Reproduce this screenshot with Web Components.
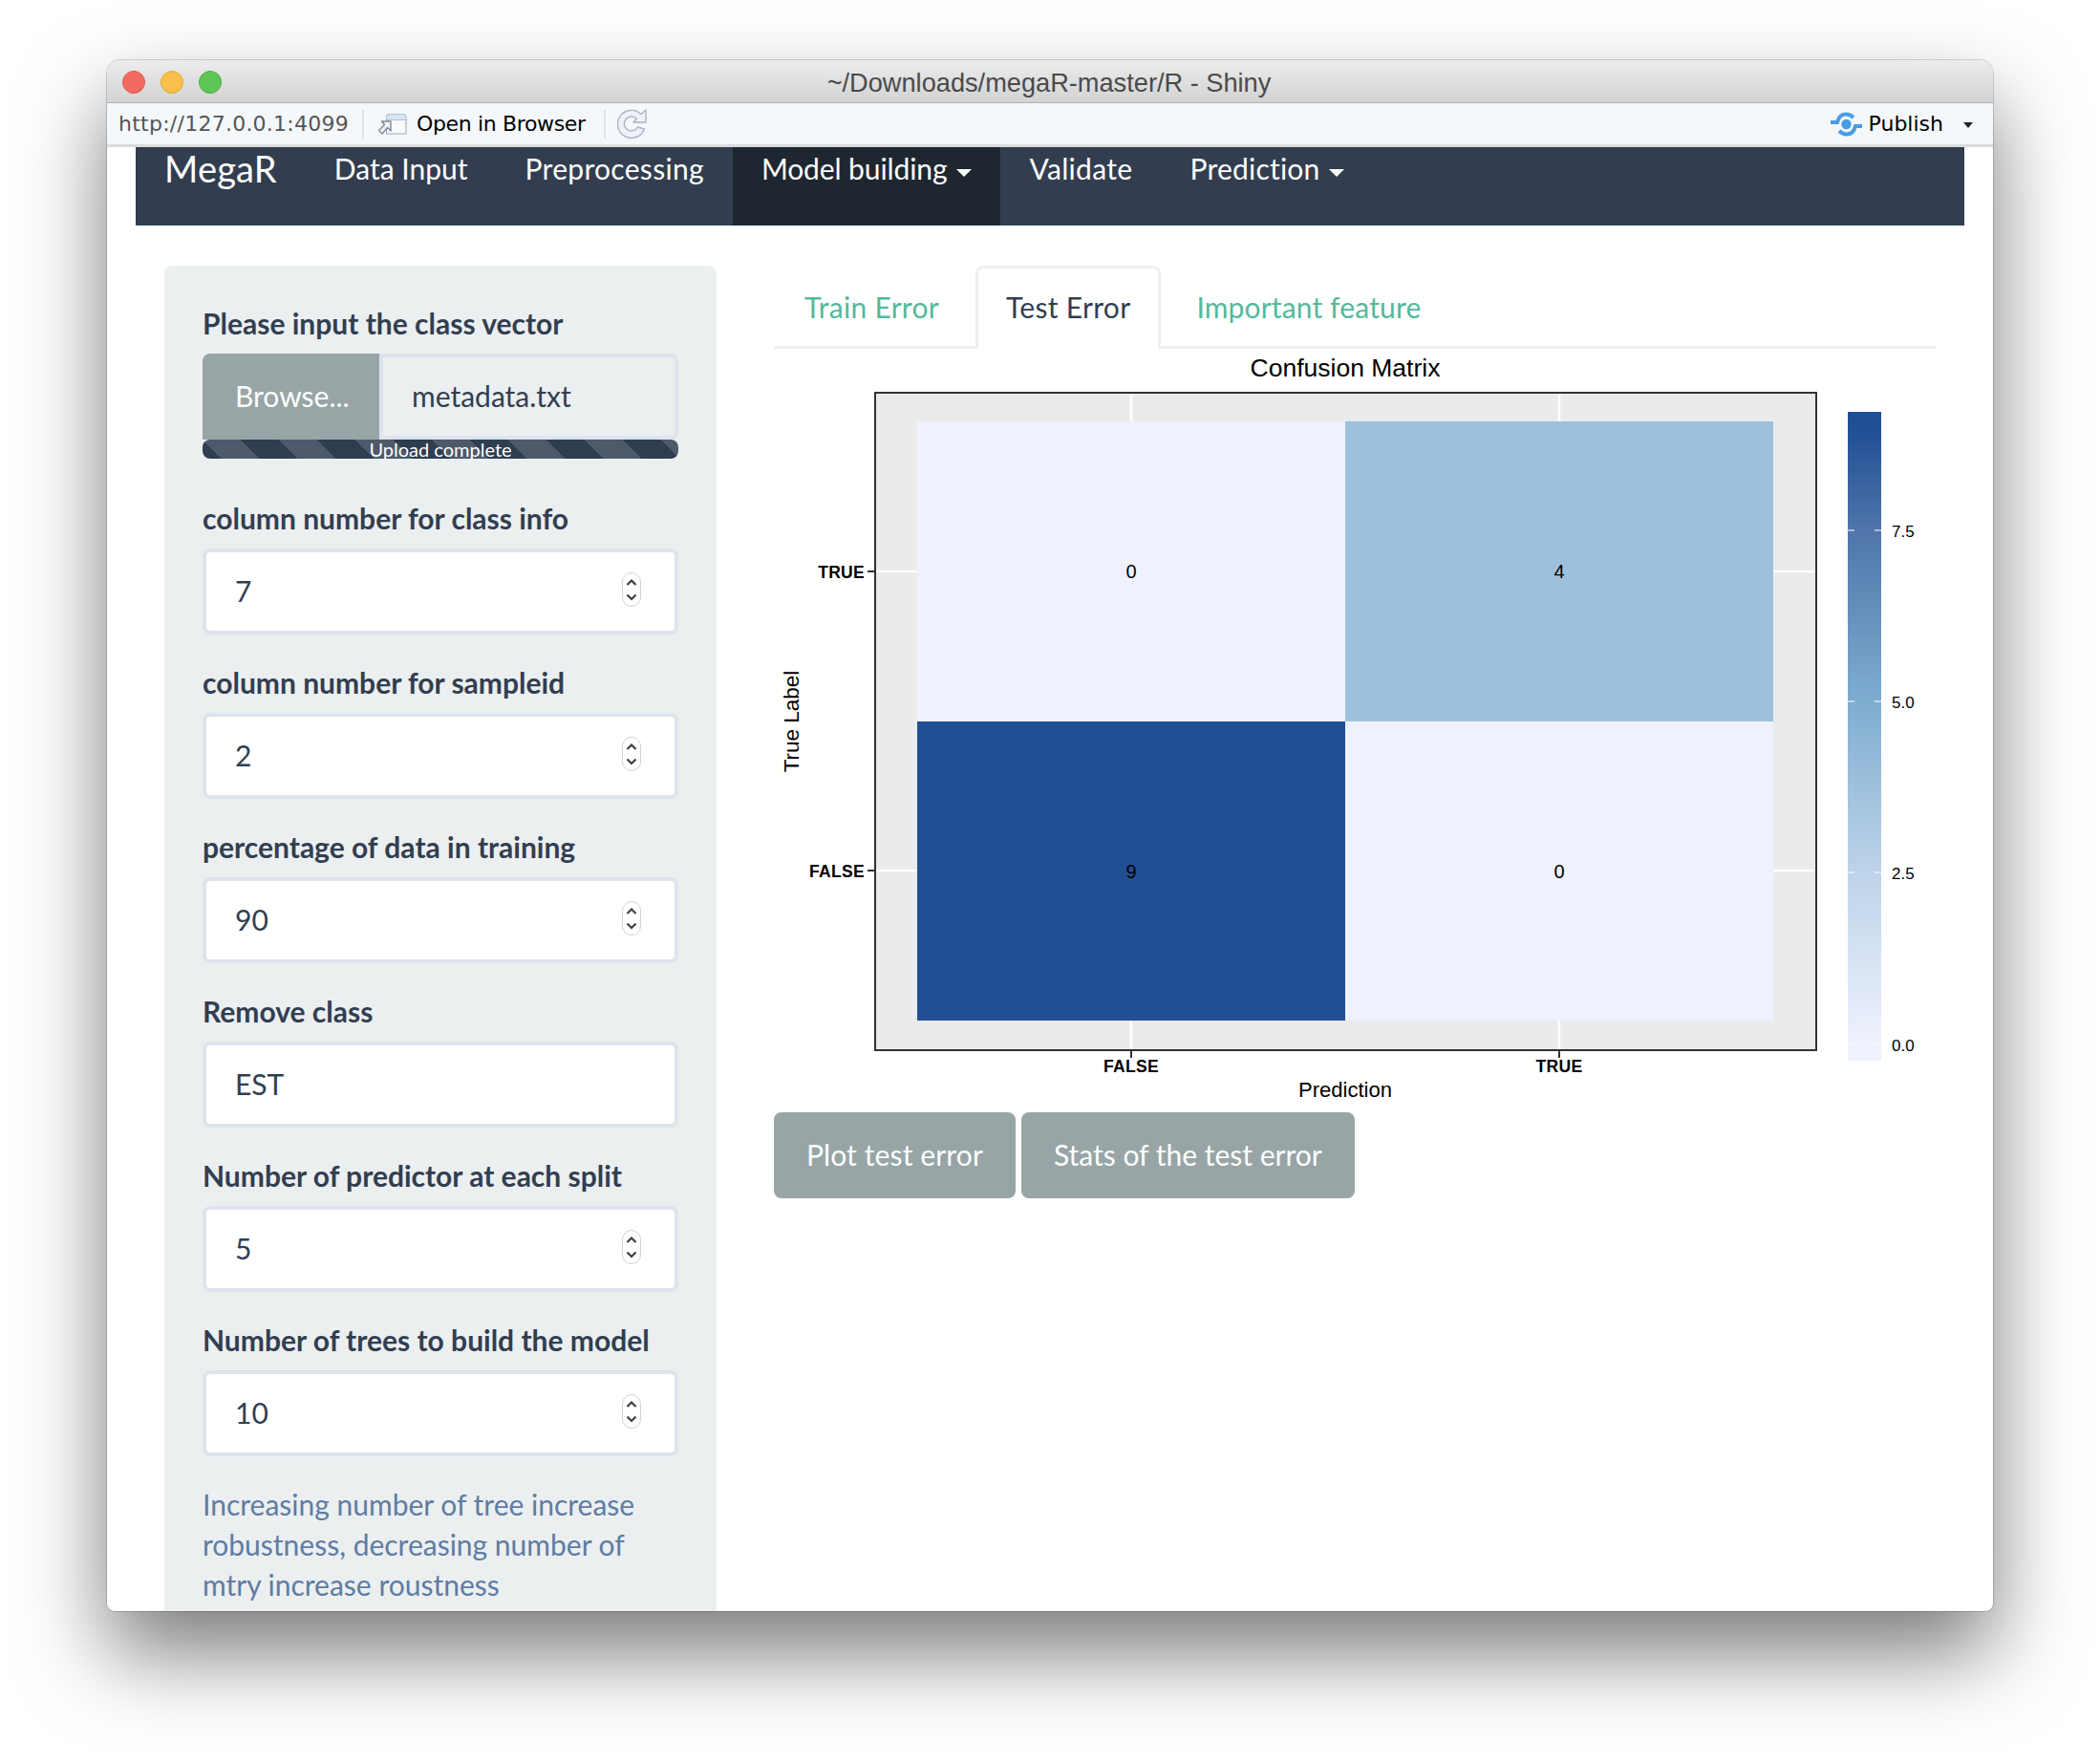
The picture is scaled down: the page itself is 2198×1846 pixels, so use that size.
<!DOCTYPE html>
<html lang="en"><head><meta charset="utf-8"><title>Shiny</title>
<style>
html,body{margin:0;background:#fff;}
body{width:2198px;height:1846px;overflow:hidden;font-family:Lato,"Liberation Sans",sans-serif;}
</style></head><body>
<app-window>
  <title-bar slot="chrome">~/Downloads/megaR-master/R - Shiny</title-bar>
  <tool-bar slot="chrome"></tool-bar>
  <top-nav slot="chrome">
    <nav-item brand style="letter-spacing:.2px">MegaR</nav-item>
    <nav-item>Data Input</nav-item>
    <nav-item style="letter-spacing:.3px">Preprocessing</nav-item>
    <nav-item active caret style="letter-spacing:-.1px">Model building</nav-item>
    <nav-item style="letter-spacing:.35px">Validate</nav-item>
    <nav-item caret style="letter-spacing:.2px">Prediction</nav-item>
  </top-nav>
  <side-panel>
    <form-field label="Please input the class vector" tight><file-input name="metadata.txt"></file-input></form-field>
    <form-field label="column number for class info"><field-input spin>7</field-input></form-field>
    <form-field label="column number for sampleid"><field-input spin>2</field-input></form-field>
    <form-field label="percentage of data in training"><field-input spin>90</field-input></form-field>
    <form-field label="Remove class"><field-input>EST</field-input></form-field>
    <form-field label="Number of predictor at each split"><field-input spin>5</field-input></form-field>
    <form-field label="Number of trees to build the model"><field-input spin>10</field-input></form-field>
    <help-text>Increasing number of tree increase robustness, decreasing number of mtry increase roustness</help-text>
  </side-panel>
  <main-panel>
    <tab-bar>
      <tab-item>Train Error</tab-item>
      <tab-item active>Test Error</tab-item>
      <tab-item style="letter-spacing:.15px;margin-left:-1px">Important feature</tab-item>
    </tab-bar>
    <confusion-plot></confusion-plot>
    <button-row>
      <action-button>Plot test error</action-button>
      <action-button style="letter-spacing:0">Stats of the test error</action-button>
    </button-row>
  </main-panel>
</app-window>
<script>
function def(name, css, html){
  customElements.define(name, class extends HTMLElement{
    constructor(){super();this.attachShadow({mode:'open'});}
    connectedCallback(){
      if(this._r)return;this._r=1;
      const h=typeof html==='function'?html(this):html;
      this.shadowRoot.innerHTML='<style>'+css+'</style>'+h;
    }
  });
}
def('app-window',`
:host{display:block;position:absolute;left:112px;top:63px;width:1974px;height:1623px;box-sizing:border-box;background:#fff;border-radius:14px 14px 8px 8px;box-shadow:0 44px 90px rgba(0,0,0,.52),0 0 0 1px rgba(0,0,0,.16);}
.clip{height:100%;border-radius:inherit;overflow:hidden;display:flex;flex-direction:column;}
.row{display:flex;align-items:flex-start;gap:60px;margin-top:42px;padding-left:60px;flex:1;min-height:0;}
`,`<div class="clip"><slot name="chrome"></slot><div class="row"><slot></slot></div></div>`);

def('title-bar',`
:host{display:flex;height:44px;align-items:center;justify-content:center;position:relative;background:linear-gradient(#ececec,#d3d3d3);border-bottom:1px solid #b1b1b1;font:27.200px "Liberation Sans",sans-serif;color:#4a4a4a;flex:none;}
.dots{position:absolute;left:16px;top:11px;display:flex;gap:16px;}
i{display:block;width:24px;height:24px;border-radius:50%;box-sizing:border-box;}
.r{background:#f06a60;border:1px solid #dc5a50}.y{background:#f8c04a;border:1px solid #dfa537}.g{background:#5ec554;border:1px solid #4cab43}
span{transform:translate(-1px,2px)}
`,`<div class="dots"><i class="r"></i><i class="y"></i><i class="g"></i></div><span><slot></slot></span>`);

def('tool-bar',`
:host{display:flex;height:43px;align-items:center;background:#f4f8fa;border-bottom:3px solid #d9dcde;font:22px "DejaVu Sans",sans-serif;color:#000;flex:none;padding-left:12px;}
.url{color:#555;width:241px;white-space:nowrap;letter-spacing:.25px;}
.sep{width:2px;height:30px;background:#dfe3e5;margin:0 14px;flex:none}
.open{margin-left:10px;white-space:nowrap;width:176px;letter-spacing:-.35px;}
svg{flex:none;display:block}
.pub{margin-left:auto;display:flex;align-items:center;}
.pub span{margin-left:7px;}
.car{width:0;height:0;border:5px solid transparent;border-top:6px solid #222;border-bottom:0;margin:3px 21px 0 21px;}
`,`<span class="url">http://127.0.0.1:4099</span><span class="sep"></span>
<svg width="31" height="30" viewBox="0 0 31 30"><path d="M12 4.500h15a3 3 0 0 1 3 3v17.500H9.500V7.500a3 3 0 0 1 2.500-3z" fill="#f8fbfe" stroke="#9aa5ad"/><path d="M12 4.500h15a3 3 0 0 1 3 3v3H9.500v-3a3 3 0 0 1 2.500-3z" fill="#d5e5fa" stroke="#b3bec8"/><path d="M14 12v10l-3.500-3.500L5 25l-3.500-3.500L7.500 15.500 4.500 12z" fill="#eef2f6" stroke="#7d8a95" stroke-width="1.400" stroke-linejoin="round"/></svg>
<span class="open">Open in Browser</span><span class="sep" style="margin-left:20px;margin-right:12px"></span>
<svg width="32" height="34" viewBox="0 0 32 34"><path d="M30 2V15H17L20.500 11.500A7.500 7.500 0 1 0 21.500 20L28.500 22A14.500 14.500 0 1 1 25 6.500Z" fill="#eef2f8" stroke="#a9b4c2" stroke-width="1.400" stroke-linejoin="round"/></svg>
<div class="pub"><svg width="33" height="26" viewBox="0 0 33 26"><path d="M0 11H7C8.500 5 12 2.500 16 2.500 19.500 2.500 22 4 24 6M33 15H26C24.500 21 21 23.500 17 23.500 13.500 23.500 11 22 9 20" fill="none" stroke="#4a9be4" stroke-width="4"/><circle cx="16.500" cy="13" r="5.200" fill="#4a9be4"/></svg><span>Publish</span><i class="car"></i></div>`);

def('top-nav',`
:host{display:flex;margin:0 30px;height:82px;background:#323e50;flex:none;align-items:stretch;}
`,`<slot></slot>`);

def('nav-item',`
:host{display:block;padding:0 30px;color:#fff;font-size:30px;line-height:44px;white-space:nowrap;}
:host([brand]){font-size:38px;line-height:44px;}
:host([active]){background:#1e2730;}
i{display:inline-block;width:0;height:0;border:8px solid transparent;border-top:8px solid #fff;border-bottom:0;margin-left:10px;vertical-align:3px;}
`,el=>`<slot></slot>`+(el.hasAttribute('caret')?'<i></i>':''));

def('side-panel',`
:host{display:block;width:578px;height:1500px;box-sizing:border-box;padding:40px;background:#ebeff0;border-radius:8px 8px 0 0;flex:none;}
`,`<slot></slot>`);

def('form-field',`
:host{display:block;margin-bottom:30px;}
:host([tight]){margin-bottom:42px;}
label{display:block;font-size:30px;font-weight:700;line-height:40px;padding-bottom:2px;color:#323e50;margin-bottom:10px;white-space:nowrap;}
`,el=>`<label>${el.getAttribute('label')}</label><slot></slot>`);

def('field-input',`
:host{display:flex;align-items:center;height:90px;box-sizing:border-box;border:4px solid #dde4ec;border-radius:8px;background:#fff;padding:0 30px 2px;color:#323e50;font-size:30px;position:relative;}
svg{position:absolute;right:34px;top:20px;}
`,el=>`<slot></slot>`+(el.hasAttribute('spin')?`<svg width="22" height="38" viewBox="0 0 22 38"><rect x="1.500" y="1.500" width="19" height="35" rx="9.500" fill="#fff" stroke="#cfd3d6"/><path d="M6.500 14L11 9.500 15.500 14M6.500 24.500l4.500 4.500 4.500-4.500" fill="none" stroke="#3c3f44" stroke-width="2.200"/></svg>`:''));

def('file-input',`
:host{display:block;}
.top{display:flex;height:90px;}
.b{width:185px;flex:none;box-sizing:border-box;background:#98a5a6;color:#fff;font-size:30px;display:flex;align-items:center;padding:0 0 2px 34px;border-radius:8px 0 0 0;}
.f{flex:1;box-sizing:border-box;border:4px solid #dde4ec;border-radius:0 8px 8px 0;background:#ebeff0;color:#323e50;font-size:30px;display:flex;align-items:center;padding:0 0 2px 30px;}
.p{height:20px;border-radius:8px;background:#2f3d50 linear-gradient(45deg,rgba(255,255,255,.15) 25%,transparent 25%,transparent 50%,rgba(255,255,255,.15) 50%,rgba(255,255,255,.15) 75%,transparent 75%,transparent);background-size:80px 80px;color:#fff;font-size:20px;line-height:20px;text-align:center;}
`,el=>`<div class="top"><div class="b">Browse...</div><div class="f">${el.getAttribute('name')}</div></div><div class="p">Upload complete</div>`);

def('help-text',`
:host{display:block;font-size:30px;line-height:42px;color:#5e7ca3;margin-top:-1px;}
`,`<slot></slot>`);

def('main-panel',`
:host{display:block;width:1216px;flex:none;}
`,`<slot></slot>`);

def('tab-bar',`
:host{display:flex;height:87px;box-sizing:border-box;border-bottom:3px solid #ecf0f1;}
`,`<slot></slot>`);

def('tab-item',`
:host{display:block;box-sizing:border-box;height:87px;padding:0 29px;margin-right:6px;border:3px solid transparent;border-bottom:0;border-radius:8px 8px 0 0;font-size:30px;line-height:81px;letter-spacing:.3px;color:#53b99a;white-space:nowrap;}
:host([active]){color:#323e50;border-color:#ecf0f1;background:#fff;}
`,`<slot></slot>`);

def('confusion-plot',`
:host{display:block;height:799px;}
svg{display:block}
text{font-family:"Liberation Sans",sans-serif;fill:#000}
.b{font-weight:700;font-size:17.500px;letter-spacing:.3px}
`,`<svg width="1216" height="799" viewBox="810 365 1216 799">
<defs><linearGradient id="cb" gradientUnits="userSpaceOnUse" x1="0" y1="449" x2="0" y2="1093">
<stop offset="0" stop-color="#214f95"/><stop offset=".165" stop-color="#4f75aa"/><stop offset=".443" stop-color="#7fadd0"/><stop offset=".72" stop-color="#bdd3e9"/><stop offset="1" stop-color="#eff2fd"/></linearGradient></defs>
<text x="1408" y="394" font-size="26.500" text-anchor="middle">Confusion Matrix</text>
<rect x="916" y="411" width="985" height="688" fill="#ebebeb"/>
<path d="M1184 411v688M1632 411v688M916 598h985M916 911h985" stroke="#fff" stroke-width="2.500"/>
<rect x="916" y="411" width="985" height="688" fill="none" stroke="#333" stroke-width="2"/>
<rect x="960" y="441" width="448" height="314" fill="#eff2fd"/>
<rect x="1408" y="441" width="448" height="314" fill="#9dc1dc"/>
<rect x="960" y="755" width="448" height="313" fill="#214f95"/>
<rect x="1408" y="755" width="448" height="313" fill="#eff2fd"/>
<g font-size="20" text-anchor="middle"><text x="1184" y="605">0</text><text x="1632" y="605">4</text><text x="1184" y="919">9</text><text x="1632" y="919">0</text></g>
<path d="M908 598h7M908 911h7M1184 1100v7M1632 1100v7" stroke="#333" stroke-width="2"/>
<text class="b" x="905" y="605" text-anchor="end">TRUE</text>
<text class="b" x="905" y="918" text-anchor="end">FALSE</text>
<text class="b" x="1184" y="1122" text-anchor="middle">FALSE</text>
<text class="b" x="1632" y="1122" text-anchor="middle">TRUE</text>
<text x="1408" y="1148" font-size="22" text-anchor="middle">Prediction</text>
<text transform="translate(836 755) rotate(-90)" font-size="22.500" text-anchor="middle">True Label</text>
<rect x="1934" y="431" width="35" height="679" fill="url(#cb)"/>
<path d="M1934 555h7M1962 555h7M1934 734h7M1962 734h7M1934 913h7M1962 913h7M1934 1093h7M1962 1093h7" stroke="#fff" stroke-opacity=".7" stroke-width="1.500"/>
<g font-size="17"><text x="1980" y="562">7.5</text><text x="1980" y="741">5.0</text><text x="1980" y="920">2.5</text><text x="1980" y="1100">0.0</text></g>
</svg>`);

def('button-row',`
:host{display:flex;gap:6px;}
`,`<slot></slot>`);

def('action-button',`
:host{display:flex;align-items:center;height:90px;box-sizing:border-box;padding:0 34px 2px;background:#98a5a6;color:#fff;border-radius:8px;font-size:30px;letter-spacing:.12px;white-space:nowrap;}
`,`<slot></slot>`);
</script>
</body></html>
